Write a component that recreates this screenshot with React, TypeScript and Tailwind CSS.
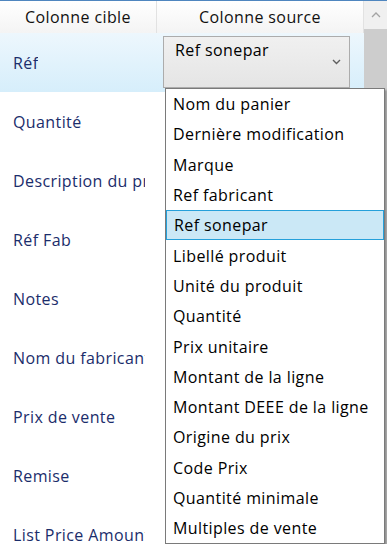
import React from "react";

const labels = [
  "Réf",
  "Quantité",
  "Description du produit",
  "Réf Fab",
  "Notes",
  "Nom du fabricant",
  "Prix de vente",
  "Remise",
  "List Price Amount",
];

const items = [
  "Nom du panier",
  "Dernière modification",
  "Marque",
  "Ref fabricant",
  "Ref sonepar",
  "Libellé produit",
  "Unité du produit",
  "Quantité",
  "Prix unitaire",
  "Montant de la ligne",
  "Montant DEEE de la ligne",
  "Origine du prix",
  "Code Prix",
  "Quantité minimale",
  "Multiples de vente",
];

export default function App() {
  const font = { fontFamily: '"Open Sans", "Noto Sans", sans-serif' };
  return (
    <div
      className="relative w-[387px] h-[544px] overflow-hidden bg-white text-[16px] tracking-[0.4px]"
      style={font}
    >
      <div className="flex h-full border-t border-[#4f86bf]">
        <div className="flex flex-col w-[364px]">
          {/* header */}
          <div className="flex h-[32px] shrink-0 bg-gradient-to-b from-white to-[#f4f4f4] text-[#111]">
            <div className="w-[157px] flex items-center justify-center border-r border-[#e2e2e2]">
              Colonne cible
            </div>
            <div className="flex-1 flex items-center justify-center border-r border-[#e2e2e2]">
              Colonne source
            </div>
          </div>
          {/* rows */}
          {labels.map((l, i) => (
            <div
              key={l}
              className={
                "flex h-[59px] shrink-0 " +
                (i === 0 ? "bg-gradient-to-b from-[#edf7fd] to-[#d6eefb]" : "")
              }
            >
              <div className="w-[157px] flex items-center pl-[13px] pr-[12px] text-[#1b2d6b] whitespace-nowrap overflow-hidden">
                <span className="block overflow-hidden">{l}</span>
              </div>
              <div className="flex-1 flex items-stretch">
                {i === 0 && (
                  <div className="ml-[6px] mt-[3px] mb-[4px] w-[187px] border border-[#acacac] bg-gradient-to-b from-[#f0f0f0] to-[#e5e5e5] flex justify-between relative">
                    <span className="pl-[11px] pt-[2px] text-black leading-[22px]">
                      Ref sonepar
                    </span>
                    <svg
                      width="9"
                      height="6"
                      viewBox="0 0 9 6"
                      className="absolute right-[8px] top-[22px]"
                    >
                      <path d="M1 1 L4.5 4.5 L8 1" stroke="#606060" strokeWidth="1.4" fill="none" />
                    </svg>
                  </div>
                )}
              </div>
            </div>
          ))}
        </div>
        {/* scrollbar */}
        <div className="flex-1 flex flex-col">
          <div className="h-[28px] shrink-0 bg-[#f0f0f0] flex items-center justify-center">
            <svg width="10" height="6" viewBox="0 0 10 6">
              <path d="M1 5 L5 1 L9 5" stroke="#a3a3a3" strokeWidth="1.3" fill="none" />
            </svg>
          </div>
          <div className="flex-1 bg-[#cdcdcd]" />
        </div>
      </div>

      {/* dropdown */}
      <div className="absolute left-[165px] top-[88px] w-[220px] border border-[#7a7a7a] bg-white shadow-[2px_2px_2px_rgba(0,0,0,0.3)] text-black">
        {items.map((it) => (
          <div
            key={it}
            className={
              "h-[30.3px] flex items-center pl-[7px] whitespace-nowrap " +
              (it === "Ref sonepar"
                ? "bg-[#cbe8f6] border border-[#26a0da] pl-[6px]"
                : "")
            }
          >
            {it}
          </div>
        ))}
      </div>
    </div>
  );
}
